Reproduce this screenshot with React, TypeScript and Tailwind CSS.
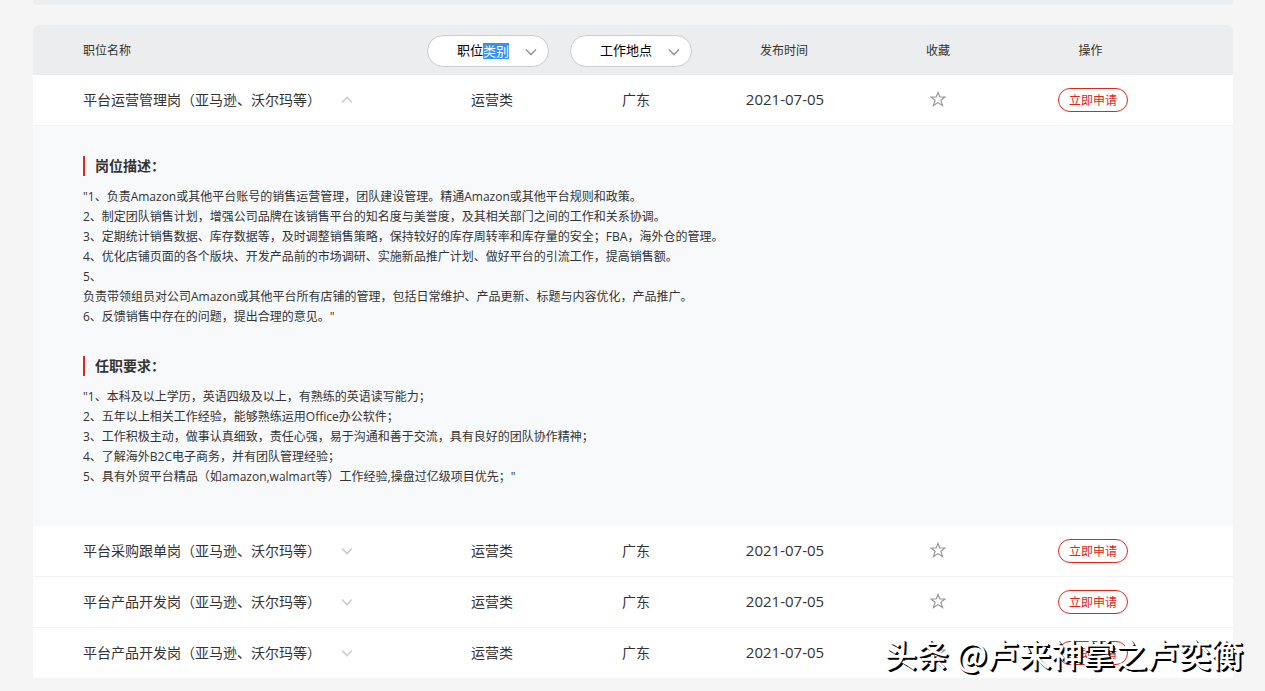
import { Fragment, useState } from 'react';

interface Job {
  id: number;
  title: string;
  category: string;
  city: string;
  date: string;
  duties: string[];
  requirements: string[];
}

const DUTIES = [
  '"1、负责Amazon或其他平台账号的销售运营管理，团队建设管理。精通Amazon或其他平台规则和政策。',
  '2、制定团队销售计划，增强公司品牌在该销售平台的知名度与美誉度，及其相关部门之间的工作和关系协调。',
  '3、定期统计销售数据、库存数据等，及时调整销售策略，保持较好的库存周转率和库存量的安全；FBA，海外仓的管理。',
  '4、优化店铺页面的各个版块、开发产品前的市场调研、实施新品推广计划、做好平台的引流工作，提高销售额。',
  '5、',
  '负责带领组员对公司Amazon或其他平台所有店铺的管理，包括日常维护、产品更新、标题与内容优化，产品推广。',
  '6、反馈销售中存在的问题，提出合理的意见。"',
];

const REQUIREMENTS = [
  '"1、本科及以上学历，英语四级及以上，有熟练的英语读写能力；',
  '2、五年以上相关工作经验，能够熟练运用Office办公软件；',
  '3、工作积极主动，做事认真细致，责任心强，易于沟通和善于交流，具有良好的团队协作精神；',
  '4、了解海外B2C电子商务，并有团队管理经验；',
  '5、具有外贸平台精品（如amazon,walmart等）工作经验,操盘过亿级项目优先；"',
];

const JOBS: Job[] = [
  '平台运营管理岗（亚马逊、沃尔玛等）',
  '平台采购跟单岗（亚马逊、沃尔玛等）',
  '平台产品开发岗（亚马逊、沃尔玛等）',
  '平台产品开发岗（亚马逊、沃尔玛等）',
].map((title, id) => ({
  id, title, category: '运营类', city: '广东', date: '2021-07-05',
  duties: DUTIES, requirements: REQUIREMENTS,
}));

function Chevron({ up = false, className = '' }: { up?: boolean; className?: string }) {
  return (
    <svg viewBox="0 0 12 8" className={`w-3 h-2 ${className}`} fill="none" stroke="currentColor" strokeWidth={1.6}>
      <path d={up ? 'M1 6.5 6 1.5l5 5' : 'M1 1.5l5 5 5-5'} />
    </svg>
  );
}

function Star({ filled }: { filled: boolean }) {
  return (
    <svg viewBox="0 0 16 16" className="w-4 h-4" fill={filled ? 'currentColor' : 'none'} stroke="currentColor" strokeWidth={1.2}>
      <path d="M8 1.4 9.8 6h5.3l-4.2 3.3 1.6 5.3L8 11.6l-4.5 3 1.6-5.3L.9 6h5.3Z" />
    </svg>
  );
}

/** pill drop-down in the table head; `marked` is the highlighted tail of the label */
function Filter({ label, options, marked }: { label: string; options: string[]; marked?: string }) {
  return (
    <div className="relative inline-block align-middle">
      <select aria-label={label}
        className="block w-[122px] h-8 pl-[29px] pr-8 appearance-none rounded-full border border-[#ccc] bg-white text-[13px] text-black outline-none">
        <option>{label}</option>
        {options.map(o => <option key={o}>{o}</option>)}
      </select>
      {marked && (
        <span aria-hidden="true"
          className="absolute top-2 left-14 h-4 leading-4 bg-[#3390ff] text-white text-[13px] pointer-events-none">
          {marked}
        </span>
      )}
      <Chevron className="absolute right-3 top-[13px] text-[#999] pointer-events-none" />
    </div>
  );
}

function Section({ title, lines }: { title: string; lines: string[] }) {
  return (
    <section>
      <h3 className="border-l-2 border-[#e1251b] pl-2.5 text-sm leading-5 font-bold">{title}</h3>
      <div className="mt-[11px] text-xs leading-5">
        {lines.map(line => <p key={line}>{line}</p>)}
      </div>
    </section>
  );
}

export default function App() {
  const [openId, setOpenId] = useState<number | null>(0);
  const [starred, setStarred] = useState<number[]>([]);

  const toggleStar = (id: number) =>
    setStarred(s => (s.includes(id) ? s.filter(x => x !== id) : [...s, id]));

  return (
    <div className="relative min-h-screen bg-[#f5f5f5] pl-[33px] pr-8 pb-[13px] text-[#333] font-['Open_Sans','Noto_Sans_CJK_SC',sans-serif]">
      <div className="h-[5px] rounded-b bg-[#ebedee]" />

      <table className="mt-5 w-full table-fixed border-separate border-spacing-0 bg-white rounded-t-md">
        <colgroup>
          <col />
          <col className="w-36" />
          <col className="w-36" />
          <col className="w-[154px]" />
          <col className="w-[152px]" />
          <col className="w-[219px]" />
        </colgroup>
        <thead>
          <tr className="h-[50px] text-xs *:bg-[#ebedee] *:font-normal *:px-0 *:pb-0 *:pt-0.5">
            <th className="rounded-tl-md"><div className="pl-[50px] text-left">职位名称</div></th>
            <th><div className="pr-2"><Filter label="职位类别" marked="类别" options={['运营类', '技术类', '职能类']} /></div></th>
            <th><div className="pr-2.5"><Filter label="工作地点" options={['广东', '上海', '北京']} /></div></th>
            <th><div className="pr-0.5">发布时间</div></th>
            <th>收藏</th>
            <th className="rounded-tr-md"><div className="pr-[66px]">操作</div></th>
          </tr>
        </thead>
        <tbody>
          {JOBS.map((job, i) => {
            const open = openId === job.id;
            const last = i === JOBS.length - 1;
            return (
              <Fragment key={job.id}>
                <tr className={last
                  ? 'h-[50px] text-sm text-center *:p-0'
                  : 'h-[51px] text-sm text-center *:p-0 *:border-b *:border-[#f3f3f3]'}>
                  <td>
                    <button type="button" aria-expanded={open} onClick={() => setOpenId(open ? null : job.id)}
                      className="flex items-center pl-[50px] cursor-pointer">
                      <span className="w-[258px] text-left">{job.title}</span>
                      <Chevron up={open} className="text-[#ccc]" />
                    </button>
                  </td>
                  <td>{job.category}</td>
                  <td>{job.city}</td>
                  <td className="text-[15px]">{job.date}</td>
                  <td>
                    <button type="button" aria-label="收藏" aria-pressed={starred.includes(job.id)}
                      onClick={() => toggleStar(job.id)} className="block mx-auto pb-0.5 text-[#999] cursor-pointer">
                      <Star filled={starred.includes(job.id)} />
                    </button>
                  </td>
                  <td>
                    <div className="flex justify-center pr-[61px]">
                      <button type="button"
                        className="w-[70px] h-6 pt-px rounded-full border border-[#e1251b] text-xs text-[#e1251b] cursor-pointer">
                        立即申请
                      </button>
                    </div>
                  </td>
                </tr>
                {open && (
                  <tr>
                    <td colSpan={6} className="p-0 bg-[#f8f9fb]">
                      <div className="flex flex-col gap-[29px] px-[50px] pt-[30px] pb-[39px]">
                        <Section title="岗位描述：" lines={job.duties} />
                        <Section title="任职要求：" lines={job.requirements} />
                      </div>
                    </td>
                  </tr>
                )}
              </Fragment>
            );
          })}
        </tbody>
      </table>

      {/* author mark over the bottom right corner */}
      <p className="absolute right-[22px] bottom-3.5 text-[32px] leading-[48px] font-medium whitespace-nowrap text-white pointer-events-none font-['Noto_Sans_CJK_SC',sans-serif] [text-shadow:1px_1px_0_#000,2px_2px_0_#000]">
        头条 @卢来神掌之卢奕衡
      </p>
    </div>
  );
}
